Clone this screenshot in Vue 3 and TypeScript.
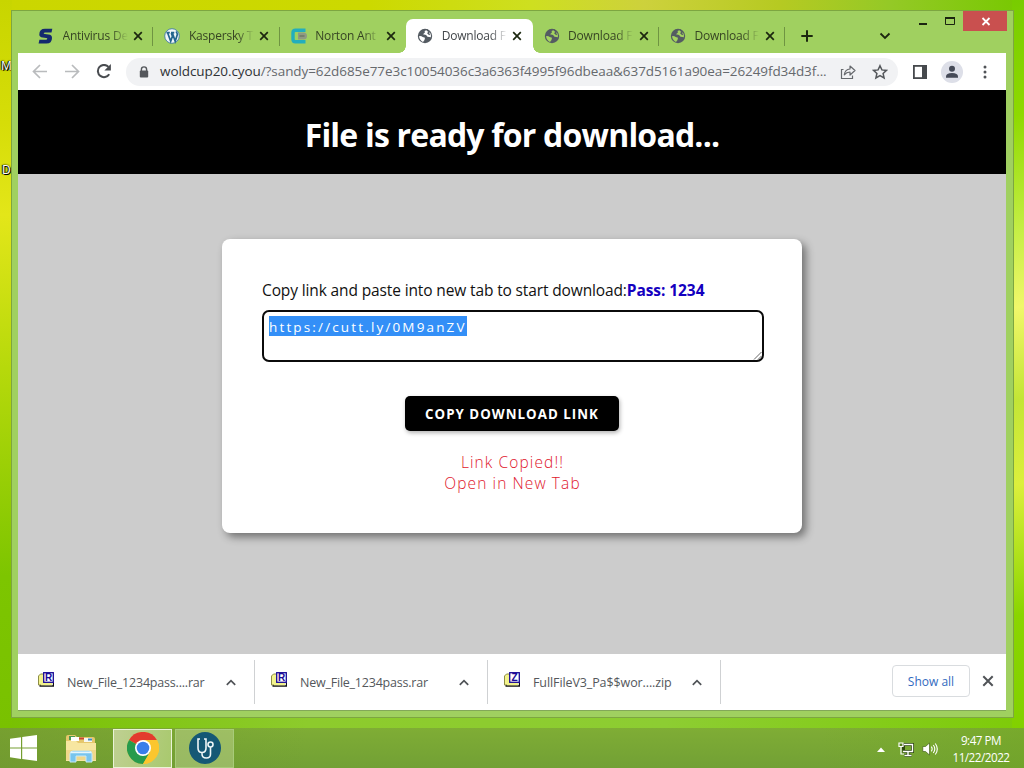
<script setup lang="ts">
import { ref } from "vue";

interface Tab {
  title: string;
  icon: "s" | "wordpress" | "norton" | "globe";
  active?: boolean;
  divider?: boolean;
}

interface Download {
  name: string;
  letter: string;
  spacing: string;
}

const tabs: Tab[] = [
  { title: "Antivirus De", icon: "s", divider: true },
  { title: "Kaspersky T", icon: "wordpress", divider: true },
  { title: "Norton Ant", icon: "norton" },
  { title: "Download F", icon: "globe", active: true },
  { title: "Download F", icon: "globe", divider: true },
  { title: "Download F", icon: "globe", divider: true },
];

const downloads: Download[] = [
  { name: "New_File_1234pass....rar", letter: "R", spacing: "-0.2px" },
  { name: "New_File_1234pass.rar", letter: "R", spacing: "-0.22px" },
  { name: "FullFileV3_Pa$$wor....zip", letter: "Z", spacing: "-0.1px" },
];

const link = ref("https://cutt.ly/0M9anZV");
</script>

<template>
  <div class="desktop">
    <span class="desktop-label first">M</span>
    <span class="desktop-label second">D</span>

    <div class="window">
      <div class="window-controls">
        <svg width="88" height="20" viewBox="0 0 88 20">
          <path d="M0 13h8" stroke="#1b2410" stroke-width="2" />
          <path d="M26.500 7v6.500h9V7" fill="none" stroke="#1b2410" />
          <path d="M26 7h10" stroke="#1b2410" stroke-width="2" />
          <rect x="44" width="44" height="20" fill="#c9504f" />
          <path d="M63.500 7l7 7M70.500 7l-7 7" stroke="#fff" stroke-width="1.800" />
        </svg>
      </div>

      <div class="tab-strip">
        <div
          v-for="(tab, index) in tabs"
          :key="index"
          class="tab"
          :class="{ active: tab.active, divider: tab.divider }"
        >
          <svg class="favicon" viewBox="0 0 16 16">
            <path
              v-if="tab.icon === 's'"
              d="M14.300 .8L13.500 4.500H7.200Q5.700 4.500 5.700 5.300Q5.700 5.900 6.900 6.100L10.500 6.500Q14 6.900 14 9.900Q14 15.500 8.300 15.500H.6L1.400 11.700H7.900Q9.300 11.700 9.300 10.700Q9.300 10.100 8.300 10L4.700 9.600Q1.300 9.200 1.300 6.500Q1.300 .8 7 .8Z"
              fill="#14296e"
            />
            <template v-else-if="tab.icon === 'wordpress'">
              <circle cx="8" cy="8" r="7.300" fill="#f1f6f9" stroke="#3f7ba4" stroke-width=".9" />
              <path
                d="M2.500 4.700h3.300M7 4.700h3.300M3.700 5l3 8.300L8.400 8.300 7.300 5M8.500 5.300l2.700 8 2-6.200Q13.600 5.200 12 3.500"
                fill="none"
                stroke="#23648f"
                stroke-width="1.700"
              />
            </template>
            <template v-else-if="tab.icon === 'norton'">
              <path d="M14.500 2.200H4.500Q2 2.200 2 4.700V11.300Q2 13.800 4.500 13.800H14.500" fill="none" stroke="#22aebd" stroke-width="3.400" />
              <path d="M7 4.500h5.500a3.500 3.500 0 0 1 0 7H7z" fill="#8f9a83" />
              <path d="M8.500 8h5" stroke="#6c7866" stroke-width="1.500" />
            </template>
            <template v-else>
              <circle cx="8" cy="8" r="7.200" fill="#545b62" />
              <path d="M2 8.200Q4 7.600 5.700 9.100L8 9.800 7.500 12 6 13.900Q2.700 12.500 2 8.200ZM9.800 1.900L7.600 3 7.900 4.600 6 6.200 9.100 7 10.500 8.800 13.900 9.200Q14.500 4 9.800 1.900Z" :fill="tab.active ? '#fff' : '#a4d35f'" />
              <path d="M9.800 1.900l2.500 1.800-1.200 1.500 1.600 1.500" fill="none" stroke="#545b62" stroke-width="1.500" />
            </template>
          </svg>
          <span class="tab-title">{{ tab.title }}</span>
          <svg class="tab-close" viewBox="0 0 10 10">
            <path d="M1.200 1.200l7.600 7.600M8.800 1.200L1.200 8.800" stroke="#1c270f" stroke-width="1.700" />
          </svg>
        </div>
        <svg class="new-tab" viewBox="0 0 12 12">
          <path d="M6 .3v11.400M.3 6h11.400" stroke="#1c270f" stroke-width="2" />
        </svg>
        <svg class="tab-search" viewBox="0 0 12 8">
          <path d="M1.500 1.500L6 6l4.500-4.500" fill="none" stroke="#1c270f" stroke-width="1.800" />
        </svg>
      </div>

      <div class="toolbar">
        <div class="nav">
          <svg width="16" height="16" viewBox="0 0 16 16">
            <path d="M15 7.500H2M8 1L1.500 7.500 8 14" fill="none" stroke="#b9bbbd" stroke-width="1.700" />
          </svg>
          <svg width="16" height="16" viewBox="0 0 16 16">
            <path d="M1 7.500h13M8 1L14.500 7.500 8 14" fill="none" stroke="#b9bbbd" stroke-width="1.700" />
          </svg>
          <svg width="16" height="16" viewBox="0 0 16 16">
            <path d="M13.200 10.200A6.100 6.100 0 1 1 12.500 2.900" fill="none" stroke="#494c50" stroke-width="2" />
            <path d="M14.900 0v6.500H8.400z" fill="#494c50" />
          </svg>
        </div>
        <div class="address">
          <svg class="lock" viewBox="0 0 10 12">
            <path d="M2.400 5V3.500a2.600 2.600 0 0 1 5.200 0V5" fill="none" stroke="#54575b" stroke-width="1.400" />
            <rect x=".8" y="4.500" width="8.400" height="7" rx="1" fill="#54575b" />
          </svg>
          <span class="url"><b>woldcup20.cyou</b>/?sandy=62d685e77e3c10054036c3a6363f4995f96dbeaa&amp;637d5161a90ea=26249fd34d3f...</span>
          <svg class="share" viewBox="0 0 16 16">
            <path d="M3.500 5.500H1.500v9h11v-3" fill="none" stroke="#66696d" stroke-width="1.200" />
            <path d="M4.300 10.800Q5 5.200 10 5V2l5 4.500-5 4.500V8Q6.500 8 4.300 10.800z" fill="none" stroke="#66696d" stroke-width="1.200" stroke-linejoin="round" />
          </svg>
          <svg class="star" viewBox="0 0 16 16">
            <path d="M8 1.700l1.900 4.200 4.600.5-3.400 3.100 1 4.500L8 11.700 3.900 14l1-4.500L1.500 6.400l4.600-.5z" fill="none" stroke="#55585c" stroke-width="1.500" />
          </svg>
        </div>
        <div class="tools">
          <svg width="14" height="14" viewBox="0 0 14 14">
            <rect x=".9" y=".9" width="12.200" height="12.200" fill="none" stroke="#46494d" stroke-width="1.800" />
            <path d="M9 1h4v12H9z" fill="#46494d" />
          </svg>
          <svg class="profile" width="22" height="22" viewBox="0 0 22 22">
            <circle cx="11" cy="11" r="11" fill="#dddfe8" />
            <circle cx="11" cy="7.700" r="3" fill="#454a57" />
            <path d="M5 16.800v-1.300q0-3.500 6-3.500t6 3.500v1.300z" fill="#454a57" />
          </svg>
          <svg width="4" height="14" viewBox="0 0 4 14">
            <circle cx="2" cy="2" r="1.500" fill="#505357" />
            <circle cx="2" cy="7" r="1.500" fill="#505357" />
            <circle cx="2" cy="12" r="1.500" fill="#505357" />
          </svg>
        </div>
      </div>

      <main class="page">
        <header>
          <h1>File is ready for download...</h1>
        </header>
        <section class="card">
          <p class="hint"><span>Copy link and paste into new tab to start download:</span><b>Pass: 1234</b></p>
          <div class="link-box">
            <span class="selected">{{ link }}</span>
            <svg class="grip" viewBox="0 0 9 9">
              <path d="M1 8.500L8.500 1M5 8.500L8.500 5" stroke="#555" stroke-width=".9" />
            </svg>
          </div>
          <button type="button" class="copy-button">COPY DOWNLOAD LINK</button>
          <p class="message"><span>Link Copied!!</span><span>Open in New Tab</span></p>
        </section>
      </main>

      <footer class="shelf">
        <div v-for="item in downloads" :key="item.name" class="download">
          <svg class="archive" viewBox="0 0 16 16">
            <path d="M.5 13V4l2-2h4v11z" fill="#f4f48e" stroke="#8d8d45" />
            <path d="M1.500 14h14V10" fill="none" stroke="#111" stroke-width="1.300" />
            <path d="M3 5h11v8.300H3z" fill="#f1f28a" />
            <rect x="5.700" y=".7" width="9.600" height="9.600" fill="#fff" stroke="#1a0a96" stroke-width="1.300" />
            <text x="10.500" y="9" text-anchor="middle">{{ item.letter }}</text>
          </svg>
          <span class="file-name" :style="{ letterSpacing: item.spacing }">{{ item.name }}</span>
          <svg class="chevron" viewBox="0 0 10 7">
            <path d="M.8 5.800L5 1.600l4.200 4.200" fill="none" stroke="#505357" stroke-width="1.700" />
          </svg>
        </div>
        <button type="button" class="show-all">Show all</button>
        <svg class="shelf-close" viewBox="0 0 12 12">
          <path d="M1.300 1.300l9.400 9.400M10.700 1.300l-9.400 9.400" stroke="#505357" stroke-width="2" />
        </svg>
      </footer>
    </div>

    <div class="taskbar">
      <svg class="start" viewBox="0 0 27 26">
        <path d="M0 3.800l11-1.600v10.200H0zM12.200 2L27 0v12.400H12.200zM0 13.600h11v10.300L0 22.300zM12.200 13.600H27V26l-14.800-2z" fill="#fff" />
      </svg>
      <svg class="explorer" viewBox="0 0 32 30">
        <path d="M1 4q0-2 2-2h7l2 2h16q2 0 2 2v20H1z" fill="#e5c76c" />
        <path d="M4 3h6v4H4z" fill="#4a9a52" />
        <path d="M6 4h8v4H6z" fill="#fff" />
        <path d="M14 4.500h5v2h-5z" fill="#c74733" />
        <path d="M19 5h8v4h-8z" fill="#f7f7ef" />
        <path d="M23 5.500h4v2h-4z" fill="#458ac0" />
        <path d="M1 8h10l2 2h18v18H1z" fill="#f7e6a1" />
        <path d="M1 17h30v10H1z" fill="#f0d88b" />
        <path d="M5 29v-8q0-3 3-3h16q3 0 3 3v8h-6v-6H11v6z" fill="#78c5ee" stroke="#c8e9f7" />
        <path d="M6 19.500h20" stroke="#e6f6fc" stroke-width="1.500" />
      </svg>
      <div class="task running">
        <svg width="32" height="32" viewBox="0 0 32 32">
          <circle cx="16" cy="16" r="16" fill="#fbc62e" />
          <path d="M16 16L2.100 8A16 16 0 0 1 29.900 8z" fill="#e33b2e" />
          <path d="M2.100 8A16 16 0 0 0 16 32l7-12-7-4z" fill="#269b4d" />
          <path d="M16 8h13.900A16 16 0 0 1 16 32l7-12z" fill="#fbc62e" />
          <circle cx="16" cy="16" r="8" fill="#fff" />
          <circle cx="16" cy="16" r="6.300" fill="#397eea" />
        </svg>
      </div>
      <div class="task">
        <svg width="32" height="32" viewBox="0 0 32 32">
          <circle cx="16" cy="16" r="16" fill="#155875" />
          <path d="M11 7H9v9q0 4.500 4 4.500t4-4.500V7H15M13 20.500v1.500q0 4 4.300 4t4.200-4v-7" fill="none" stroke="#eef6f7" stroke-width="1.600" />
          <circle cx="21.500" cy="12.500" r="2.500" fill="#155875" stroke="#eef6f7" stroke-width="1.600" />
        </svg>
      </div>
      <div class="tray">
        <svg class="tray-up" viewBox="0 0 8 5"><path d="M0 5l4-4.500L8 5z" fill="#fff" /></svg>
        <svg class="network" viewBox="0 0 16 15">
          <path d="M5.500 2.500h9v7h-9zM10 9.500v4M6.500 13.500h7" fill="none" stroke="#2d4610" stroke-width="3" />
          <path d="M6 2.500h8.500v7H5M10 9.500v4M6.500 13.500h7" fill="none" stroke="#fff" stroke-width="1.400" />
          <path d="M1 1h4v3.500H1zM3 4.500V12h3" fill="#567f1e" stroke="#fff" stroke-width="1.200" />
        </svg>
        <svg class="volume" viewBox="0 0 16 14">
          <path d="M.8 4.500h2.700L7.500 1v12L3.500 9.500H.8z" fill="#fff" stroke="#35500e" stroke-width=".6" />
          <path d="M9.300 4.700q1.700 2.300 0 4.600M11.300 3q3 4 0 8M13.300 1.500q4 5.500 0 11" fill="none" stroke="#fff" stroke-width="1.100" />
        </svg>
        <div class="clock"><span>9:47 PM</span><span>11/22/2022</span></div>
      </div>
    </div>
  </div>
</template>

<style>
body {
  margin: 0;
  overflow: hidden;
}
</style>

<style scoped>
.desktop {
  position: relative;
  display: flex;
  flex-direction: column;
  width: 1024px;
  height: 768px;
  overflow: hidden;
  box-sizing: border-box;
  padding: 10px 11px 0;
  font-family: "Open Sans", "Noto Sans", sans-serif;
  background:
    linear-gradient(180deg, #c8d500, #d6dd08 16%, #e3e619 28%, #b6d90b 48%, #7dc500 75%, #78c000) 0 0 / 12px 768px no-repeat,
    linear-gradient(170deg, #78cc00, #8ed900 15%, #c5ee45 30%, #f0f76a 40%, #c3e536 52%, #dcef3c 63%, #8ad500 80%, #7fcf00) 100% 0 / 12px 768px no-repeat,
    linear-gradient(90deg, #cbd600, #ccd900 36%, #cedf20 52%, #cdd13c 63%, #b6ca22 76%, #94c926 87%, #77c800) 0 0 / 100% 12px no-repeat,
    linear-gradient(90deg, #78c000, #8dcb2c 30%, #8dcd32 65%, #7ecb09);
}

svg {
  display: block;
  flex: none;
}

.desktop-label {
  position: absolute;
  left: 1px;
  color: #fff;
  font-size: 12px;
  line-height: 14px;
  text-shadow: 1px 1px 0 #000, -1px 0 1px #000, 0 0 2px #000;
}

.first {
  top: 59px;
}

.second {
  top: 163px;
  left: 2px;
}

.window {
  position: relative;
  display: flex;
  flex-direction: column;
  width: 1003px;
  height: 708px;
  flex: none;
  box-sizing: border-box;
  padding: 0 7px 0 6px;
  background: #a0d060;
  border: 1px solid #7da641;
}

.window-controls {
  position: absolute;
  top: 0;
  right: 6px;
}

.tab-strip {
  display: flex;
  align-items: flex-end;
  height: 42px;
  padding-left: 9px;
}

.tab {
  position: relative;
  display: flex;
  align-items: center;
  width: 126.4px;
  height: 34px;
  flex: none;
  box-sizing: border-box;
  padding-left: 11px;
}

.tab.divider::after {
  position: absolute;
  top: 8px;
  right: 0;
  width: 1px;
  height: 19px;
  background: #6f9442;
  content: "";
}

.tab.active {
  background: #fff;
  border-radius: 7px 7px 0 0;
}

.tab.active::before,
.tab.active::after {
  position: absolute;
  bottom: 0;
  width: 7px;
  height: 7px;
  content: "";
}

.tab.active::before {
  left: -7px;
  background: radial-gradient(circle at 0 0, transparent 6.5px, #fff 7px);
}

.tab.active::after {
  right: -7px;
  background: radial-gradient(circle at 100% 0, transparent 6.5px, #fff 7px);
}

.favicon {
  width: 16px;
  height: 16px;
}

.tab-title {
  width: 68px;
  margin-left: 8.5px;
  color: #364423;
  font-size: 12px;
  line-height: 20px;
  letter-spacing: -0.2px;
  white-space: nowrap;
  mask-image: linear-gradient(90deg, #000 48px, transparent 65px);
}

.active .tab-title {
  color: #42464a;
}

.tab-close {
  width: 10px;
  height: 10px;
  margin-left: 2.5px;
}

.new-tab {
  width: 12px;
  height: 12px;
  margin: 0 0 11px 16px;
}

.tab-search {
  width: 12px;
  height: 8px;
  margin: 0 0 13px 66px;
}

.toolbar {
  display: flex;
  align-items: center;
  height: 37px;
  flex: none;
  background: #fff;
}

.nav {
  display: flex;
  gap: 16px;
  margin-left: 14px;
}

.address {
  display: flex;
  align-items: center;
  width: 772px;
  height: 28px;
  box-sizing: border-box;
  margin-left: 14px;
  padding-left: 13px;
  background: #f1f2f4;
  border-radius: 14px;
}

.lock {
  width: 10px;
  height: 12px;
}

.url {
  width: 670px;
  margin: 0 0 2px 11px;
  color: #66696d;
  font-size: 13.5px;
  line-height: 20px;
  letter-spacing: -0.08px;
  white-space: nowrap;
}

.url b {
  color: #2f3236;
  font-weight: 400;
}

.share {
  width: 16px;
  height: 16px;
  margin-left: 10px;
}

.star {
  width: 16px;
  height: 16px;
  margin-left: 16px;
}

.tools {
  display: flex;
  align-items: center;
  margin-left: 15px;
}

.profile {
  margin: 0 20px 0 14px;
}

.page {
  display: flex;
  flex-direction: column;
  align-items: center;
  height: 564px;
  flex: none;
  background: #ccc;
}

.page header {
  display: grid;
  place-items: center;
  width: 100%;
  height: 84px;
  background: #000;
}

h1 {
  margin: 0 0 -6px;
  color: #fff;
  font-size: 32px;
  font-weight: 700;
  line-height: 44px;
  letter-spacing: -0.8px;
  white-space: nowrap;
}

.card {
  display: flex;
  flex-direction: column;
  align-items: center;
  width: 580px;
  height: 294px;
  box-sizing: border-box;
  margin-top: 65px;
  padding: 40px 38px 0 40px;
  background: #fff;
  border-radius: 8px;
  box-shadow: 4px 4px 8px rgb(0 0 0 / 45%);
}

.hint {
  align-self: flex-start;
  margin: 0;
  color: #111;
  font-size: 15.5px;
  line-height: 22px;
  letter-spacing: -0.13px;
  white-space: nowrap;
}

.hint b {
  color: #1400c0;
  letter-spacing: -0.08px;
}

.link-box {
  position: relative;
  width: 502px;
  height: 52px;
  box-sizing: border-box;
  margin-top: 9px;
  padding: 4px 5px;
  border: 2px solid #0b0b0b;
  border-radius: 7px;
  line-height: 20px;
}

.selected {
  display: inline-block;
  height: 20px;
  color: #fff;
  background: #338ff7;
  font-size: 13.5px;
  line-height: 22px;
  letter-spacing: 2.15px;
}

.grip {
  position: absolute;
  right: 0;
  bottom: 0;
  width: 9px;
  height: 9px;
}

.copy-button {
  width: 214px;
  height: 35px;
  margin: 34px 0 0 -2px;
  padding: 0;
  color: #fff;
  background: #000;
  border: 0;
  border-radius: 5px;
  box-shadow: 1px 2px 4px rgb(0 0 0 / 30%);
  font: inherit;
  font-size: 13.3px;
  font-weight: 700;
  letter-spacing: 1.03px;
}

.message {
  display: grid;
  margin: 21px 0 0 -1px;
  color: #e0162c;
  font-size: 15.5px;
  font-weight: 300;
  line-height: 21px;
  letter-spacing: 1.1px;
  text-align: center;
}

.shelf {
  display: flex;
  align-items: center;
  height: 56px;
  flex: none;
  background: #fff;
  border-bottom: 1px solid #83a858;
}

.download {
  display: flex;
  align-items: center;
  width: 233px;
  height: 44px;
  flex: none;
  box-sizing: border-box;
  padding-left: 16px;
  border-right: 1px solid #cfd1d3;
}

.download:first-child {
  width: 237px;
  padding-left: 20px;
}

.archive {
  width: 16px;
  height: 16px;
  margin-bottom: 4px;
}

.archive text {
  fill: #1a0a96;
  font: 700 10px "Liberation Sans", sans-serif;
}

.file-name {
  width: 146px;
  margin: 2px 0 0 13px;
  color: #54575b;
  font-size: 12.5px;
  line-height: 20px;
  white-space: nowrap;
}

.chevron {
  width: 10px;
  height: 7px;
  margin-left: 13px;
}

.show-all {
  width: 78px;
  height: 32px;
  margin: 0 0 2px auto;
  padding: 0;
  color: #326ac0;
  background: #fff;
  border: 1px solid #d9dcdf;
  border-radius: 4px;
  font: inherit;
  font-size: 12px;
}

.shelf-close {
  width: 12px;
  height: 12px;
  margin: 0 12px 2px;
}

.taskbar {
  display: flex;
  align-items: center;
  height: 40px;
  flex: none;
  margin: 10px -11px 0;
  background: linear-gradient(90deg, rgb(113 151 44 / 60%), transparent 30%, transparent 80%, rgb(113 166 35 / 50%)), linear-gradient(#7fad35, #72a035);
}

.start {
  width: 27px;
  height: 26px;
  margin-left: 10px;
}

.explorer {
  width: 32px;
  height: 30px;
  margin-left: 28px;
}

.task {
  display: grid;
  place-items: center;
  width: 59px;
  height: 39px;
  box-sizing: border-box;
  margin-left: 3px;
  background: rgb(199 218 157 / 45%);
  border: 1px solid #a8cb79;
}

.task.running {
  margin-left: 16px;
  background: linear-gradient(100deg, #bfd092, #a9c96e);
  border-color: #eaf3d7;
}

.tray {
  display: flex;
  align-items: center;
  height: 40px;
  margin-left: auto;
  padding-right: 13px;
}

.tray-up {
  width: 8px;
  height: 5px;
  margin-top: 2px;
}

.network {
  width: 16px;
  height: 15px;
  margin: 2px 0 0 13px;
}

.volume {
  width: 16px;
  height: 14px;
  margin: 2px 0 0 8px;
}

.clock {
  display: grid;
  width: 60px;
  margin: 2px 0 0 13px;
  color: #fff;
  font-size: 11.7px;
  line-height: 17px;
  letter-spacing: -0.5px;
  justify-items: center;
  white-space: nowrap;
}
</style>
